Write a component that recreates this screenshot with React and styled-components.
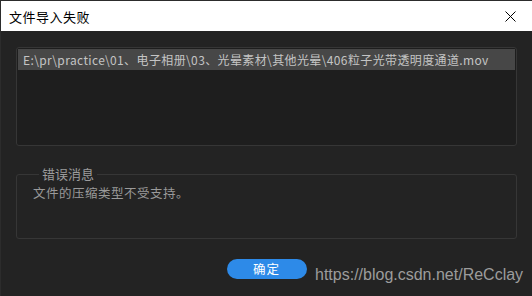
import React from 'react';
import styled, { createGlobalStyle } from 'styled-components';

const GlobalStyle = createGlobalStyle`
    html, body {
        margin: 0;
        padding: 0;
        background: #232323;
    }
`

const Window = styled.div`
    position: relative;
    box-sizing: border-box;
    width: 532px;
    height: 296px;
    background-color: #232323;
    border-left: 1px solid #2c2c2c;
    border-top: 1px solid #2c2c2c;
    display: flex;
    flex-direction: column;
    font-family: "Noto Sans CJK SC", "Noto Sans", sans-serif;
    overflow: hidden;
`

const TitleBar = styled.div`
    height: 30px;
    background-color: #fff;
    display: flex;
    align-items: center;
    justify-content: space-between;
    padding: 0 16px 0 8px;
`

const Title = styled.span`
    color: #000;
    font-size: 13px;
    letter-spacing: 0.5px;
    line-height: 1;
`

const CloseButton = styled.svg`
    width: 11px;
    height: 11px;
`

const Body = styled.div`
    flex: 1;
    display: flex;
    flex-direction: column;
    padding: 16px 15px 0 15px;
`

const FileList = styled.div`
    box-sizing: border-box;
    height: 99px;
    border: 1px solid #363636;
    border-radius: 3px;
    background-color: #1e1e1e;
    padding: 1px;
`

const FileRow = styled.div`
    height: 21px;
    background-color: #474747;
    color: #c4c4c4;
    font-size: 12px;
    line-height: 21px;
    padding-left: 5px;
    white-space: nowrap;
    letter-spacing: 0.38px;
`

const MessageBox = styled.fieldset`
    box-sizing: border-box;
    height: 73px;
    margin: 20px 0 0 0;
    padding: 0 16px;
    border: 1px solid #363636;
    border-radius: 3px;
`

const Legend = styled.legend`
    padding: 0 3px;
    margin-left: 6px;
    color: #9c9c9c;
    font-size: 13px;
    line-height: 16px;
`

const Message = styled.div`
    color: #9a9a9a;
    font-size: 12.5px;
    letter-spacing: 0.5px;
    line-height: 16px;
    margin-top: 3px;
`

const Footer = styled.div`
    display: flex;
    justify-content: center;
    padding-top: 20px;
`

const OkButton = styled.button`
    width: 80px;
    height: 20px;
    border: none;
    border-radius: 10px;
    background-color: #2d8ae8;
    color: #fff;
    font-family: "Noto Sans CJK SC", sans-serif;
    font-size: 12.5px;
    line-height: 20px;
    padding: 0;
    letter-spacing: 1px;
`

const Watermark = styled.span`
    position: absolute;
    left: 314px;
    top: 264px;
    color: #9c9c9c;
    font-family: "Liberation Sans", Arial, sans-serif;
    font-size: 16px;
    line-height: 20px;
`

const App = () => {
    return (
        <Window>
            <GlobalStyle />
            <TitleBar>
                <Title>文件导入失败</Title>
                <CloseButton viewBox="0 0 11 11">
                    <path d="M0.5 0.5 L10.5 10.5 M10.5 0.5 L0.5 10.5" stroke="#000" strokeWidth="1" />
                </CloseButton>
            </TitleBar>
            <Body>
                <FileList>
                    <FileRow>E:\pr\practice\01、电子相册\03、光晕素材\其他光晕\406粒子光带透明度通道.mov</FileRow>
                </FileList>
                <MessageBox>
                    <Legend>错误消息</Legend>
                    <Message>文件的压缩类型不受支持。</Message>
                </MessageBox>
                <Footer>
                    <OkButton>确定</OkButton>
                </Footer>
            </Body>
            <Watermark>https://blog.csdn.net/ReCclay</Watermark>
        </Window>
    );
};

export default App;
